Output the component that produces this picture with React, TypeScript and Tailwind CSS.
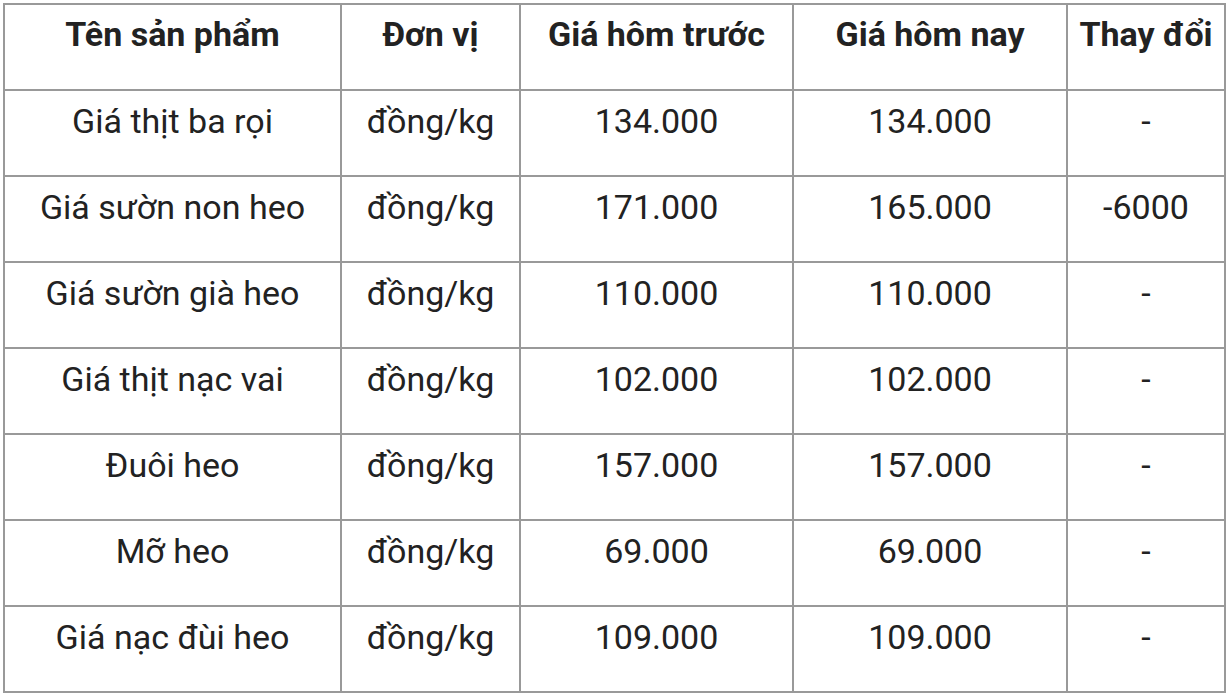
import React from "react";

const rows = [
  ["Giá thịt ba rọi", "đồng/kg", "134.000", "134.000", "-"],
  ["Giá sườn non heo", "đồng/kg", "171.000", "165.000", "-6000"],
  ["Giá sườn già heo", "đồng/kg", "110.000", "110.000", "-"],
  ["Giá thịt nạc vai", "đồng/kg", "102.000", "102.000", "-"],
  ["Đuôi heo", "đồng/kg", "157.000", "157.000", "-"],
  ["Mỡ heo", "đồng/kg", "69.000", "69.000", "-"],
  ["Giá nạc đùi heo", "đồng/kg", "109.000", "109.000", "-"],
];

const headers = ["Tên sản phẩm", "Đơn vị", "Giá hôm trước", "Giá hôm nay", "Thay đổi"];

export default function App() {
  return (
    <div className="bg-white w-[1228px] h-[696px] pt-[3px] pl-[3px] font-['Roboto',sans-serif] text-[#222222]">
      <table className="w-[1221px] table-fixed border-collapse border-2 border-[#999999]">
        <colgroup>
          <col className="w-[337px]" />
          <col className="w-[179px]" />
          <col className="w-[273px]" />
          <col className="w-[274px]" />
          <col className="w-[158px]" />
        </colgroup>
        <thead>
          <tr className="h-[86px]">
            {headers.map((h) => (
              <th
                key={h}
                className="border-2 border-[#999999] align-top pt-[4px] px-0 text-center font-bold text-[34px] leading-[51px] whitespace-nowrap"
              >
                {h}
              </th>
            ))}
          </tr>
        </thead>
        <tbody>
          {rows.map((r, i) => (
            <tr key={i} className="h-[86px]">
              {r.map((c, j) => (
                <td
                  key={j}
                  className="border-2 border-[#999999] align-top pt-[5px] px-0 text-center text-[34px] leading-[51px] whitespace-nowrap"
                >
                  {c}
                </td>
              ))}
            </tr>
          ))}
        </tbody>
      </table>
    </div>
  );
}
